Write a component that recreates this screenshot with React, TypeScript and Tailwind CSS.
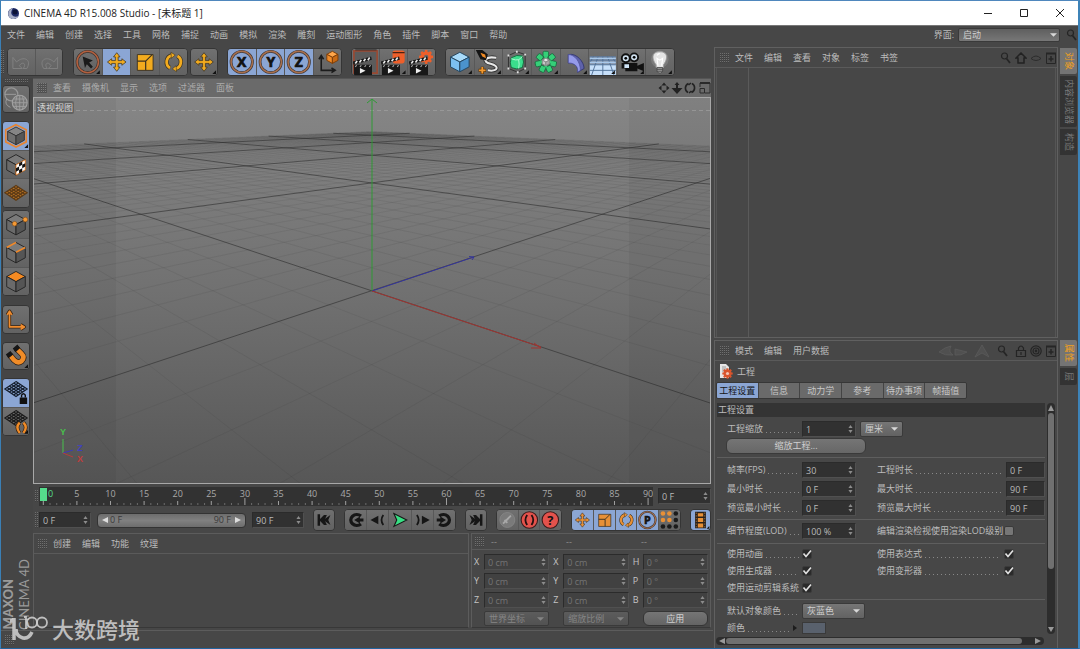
import type { ReactNode } from "react";
import clsx from "clsx";

const MENU = ["文件", "编辑", "创建", "选择", "工具", "网格", "捕捉", "动画", "模拟", "渲染", "雕刻", "运动图形", "角色", "插件", "脚本", "窗口", "帮助"];
const VIEW_MENU = ["查看", "摄像机", "显示", "选项", "过滤器", "面板"];
const OBJECT_MENU = ["文件", "编辑", "查看", "对象", "标签", "书签"];
const MATERIAL_MENU = ["创建", "编辑", "功能", "纹理"];
const ATTR_MENU = ["模式", "编辑", "用户数据"];
const ATTR_TABS = ["工程设置", "信息", "动力学", "参考", "待办事项", "帧插值"];

/* ---------- shared pieces ---------- */

function Grip({ className }: { className: string }) {
  return (
    <span
      aria-hidden
      className={clsx(
        "shrink-0 bg-[length:2px_2px] bg-[linear-gradient(90deg,#00000000_1px,#474747_1px),linear-gradient(#8a8a8a_1px,#3a3a3a_1px)]",
        className
      )}
    />
  );
}

function MenuItems({ items, className }: { items: string[]; className?: string }) {
  return (
    <nav className={clsx("flex gap-[11px]", className)}>
      {items.map((item) => (
        <button key={item} className="whitespace-nowrap">
          {item}
        </button>
      ))}
    </nav>
  );
}

function ToolGroup({ className, column, children }: { className: string; column?: boolean; children: ReactNode }) {
  return (
    <div
      className={clsx(
        "flex shrink-0 divide-[#585858] overflow-hidden rounded-sm border border-[#353535] bg-[#676767]",
        column ? "flex-col divide-y" : "divide-x",
        className
      )}
    >
      {children}
    </div>
  );
}

interface ToolProps {
  label: string;
  active?: boolean;
  more?: boolean;
  children: ReactNode;
}

function Tool({ label, active, more, children }: ToolProps) {
  return (
    <button
      aria-label={label}
      title={label}
      className={clsx("min-h-0 min-w-0 flex-1", active ? "bg-[#8ba6d4]" : "bg-linear-to-b from-[#707070] to-[#626262]")}
    >
      <svg viewBox="0 0 28 28" className="h-full w-full">
        {children}
        {more && <path d="M27 23v4h-4z" fill="#111" />}
      </svg>
    </button>
  );
}

function Spinner() {
  return (
    <svg viewBox="0 0 6 10" className="pointer-events-none absolute right-[3px] top-1/2 h-2 w-[5px] -translate-y-1/2">
      <path d="M3 0l2.600 3.800H.4zM3 10L.4 6.200h5.200z" fill="#8c8c8c" />
    </svg>
  );
}

interface NumberFieldProps {
  label: string;
  value: string;
  className?: string;
  dim?: boolean;
  spinner?: boolean;
}

function NumberField({ label, value, className, dim, spinner = true }: NumberFieldProps) {
  return (
    <span className={clsx("relative block h-4 shrink-0", className)}>
      <input
        aria-label={label}
        defaultValue={value}
        className={clsx(
          "block h-full w-full border border-t-[#2b2b2b] border-r-[#505050] border-b-[#505050] border-l-[#2b2b2b] pl-[3px] outline-none",
          dim ? "bg-[#414141] text-[#747474]" : "bg-[#313131] text-[#b9b9b9]"
        )}
      />
      {spinner && <Spinner />}
    </span>
  );
}

function Dropdown({ label, value, className, dim }: { label: string; value: string; className: string; dim?: boolean }) {
  return (
    <span className={clsx("relative block shrink-0", className)}>
      <select
        aria-label={label}
        className={clsx(
          "block h-full w-full appearance-none rounded-xs border border-[#3a3a3a] bg-linear-to-b pl-1 outline-none",
          dim ? "from-[#5c5c5c] to-[#525252] text-[#858585]" : "from-[#767676] to-[#626262] text-[#cfcfcf]"
        )}
      >
        <option>{value}</option>
      </select>
      <svg viewBox="0 0 8 4" className="pointer-events-none absolute right-[5px] top-1/2 h-1 w-[7px] -translate-y-1/2">
        <path d="M0 0h8L4 4z" fill={dim ? "#858585" : "#d8d8d8"} />
      </svg>
    </span>
  );
}

/* ---------- drawings ---------- */

interface CubeProps {
  x: number;
  y: number;
  w: number;
  h: number;
  top: string;
  left: string;
  right: string;
  stroke?: string;
}

function Cube({ x, y, w, h, top, left, right, stroke = "#222" }: CubeProps) {
  const k = h / 2;
  return (
    <g stroke={stroke} strokeWidth="1" strokeLinejoin="round">
      <path d={`M${x} ${y - h}L${x + w} ${y - k}L${x} ${y}L${x - w} ${y - k}z`} fill={top} />
      <path d={`M${x - w} ${y - k}L${x} ${y}V${y + h}L${x - w} ${y + k}z`} fill={left} />
      <path d={`M${x + w} ${y - k}L${x} ${y}V${y + h}L${x + w} ${y + k}z`} fill={right} />
    </g>
  );
}

function GrayCube({ top = "#7a7a7a" }: { top?: string }) {
  return <Cube x={14} y={14} w={10} h={11} top={top} left="#6a6a6a" right="#555" stroke="#242424" />;
}

function MoveCross({ fill }: { fill: string }) {
  return (
    <path
      d="M14 4l3.500 4.500h-2v4h4v-2L24 14l-4.500 3.500v-2h-4v4h2L14 24l-3.500-4.500h2v-4h-4v2L4 14l4.500-3.500v2h4v-4h-2z"
      fill={fill}
      stroke="#3b3222"
      strokeWidth=".8"
    />
  );
}

function ScaleBox({ fill }: { fill: string }) {
  return (
    <g fill={fill} stroke="#3b3222" strokeWidth="1">
      <path d="M6 6h17v17H6z" />
      <path d="M6 13h9v10M15 13l7-7" fill="none" strokeWidth="1.300" />
    </g>
  );
}

function RotateRing({ fill }: { fill: string }) {
  return (
    <g fill="none">
      <path d="M10 20.500A7.500 7.500 0 0 1 12 6.800M18 7.500A7.500 7.500 0 0 1 16 21.200" stroke="#3b3222" strokeWidth="4.500" />
      <path d="M10 20.500A7.500 7.500 0 0 1 12 6.800M18 7.500A7.500 7.500 0 0 1 16 21.200" stroke={fill} strokeWidth="3" />
      <path d="M11 3.500l4.500 3-4 3.500zM17 24.500l-4.500-3 4-3.500z" fill={fill} stroke="#3b3222" strokeWidth=".6" />
    </g>
  );
}

function AxisLetter({ letter }: { letter: string }) {
  return (
    <>
      <circle cx="14" cy="14" r="11.500" fill="none" stroke="#3c3838" strokeWidth="3" />
      <circle cx="14" cy="14" r="11.500" fill="none" stroke="#a86f4c" strokeWidth="1.600" />
      <text x="14" y="19.500" textAnchor="middle" fill="#111" stroke="#111" strokeWidth=".8" className="font-['Open_Sans'] text-[15px] font-bold">
        {letter}
      </text>
    </>
  );
}

function Clapper() {
  return (
    <>
      <path d="M1.500 17H21v11H1.500z" fill="#181818" />
      <path d="M.5 13.500L20 8l.8 3.500L1 17z" fill="#151515" />
      <path d="M3 15.700l2-2.800M7.500 14.500l2-2.800M12 13.200l2-2.800M16.500 12l2-2.800" stroke="#e8e8e8" strokeWidth="1.800" />
      <path d="M3 19.300l1.500-1.800M8 19.300l1.500-1.800M13 19.300l1.500-1.800M18 19.300l1.500-1.800" stroke="#aaa" strokeWidth="1.200" />
      <path d="M8 20.500l6 3-6 3z" fill="#eee" />
    </>
  );
}

function Gear({ x, y, r, fill, hole }: { x: number; y: number; r: number; fill: string; hole: string }) {
  return (
    <g>
      {[0, 45, 90, 135].map((a) => (
        <rect key={a} x={x - r * 0.25} y={y - r * 1.3} width={r * 0.5} height={r * 2.6} fill={fill} transform={`rotate(${a} ${x} ${y})`} />
      ))}
      <circle cx={x} cy={y} r={r} fill={fill} />
      <circle cx={x} cy={y} r={r * 0.4} fill={hole} />
    </g>
  );
}

function Mesh({ stroke, fill = "none", y = 14 }: { stroke: string; fill?: string; y?: number }) {
  return (
    <g stroke={stroke} strokeWidth="1.300" fill="none">
      <path d={`M14 ${y - 8}L26 ${y}L14 ${y + 8}L2 ${y}z`} fill={fill} />
      {[1, 2, 3, 4].map((n) => (
        <path
          key={n}
          d={`M${14 + n * 2.4} ${y - 8 + n * 1.6}l-12 8M${14 - n * 2.4} ${y - 8 + n * 1.6}l12 8`}
        />
      ))}
    </g>
  );
}

const SearchIcon = () => (
  <svg viewBox="0 0 12 12" className="h-3 w-3">
    <circle cx="4.500" cy="4" r="3" fill="none" stroke="#252525" strokeWidth="1.200" />
    <path d="M6.500 6.500L10 11" stroke="#252525" strokeWidth="1.800" />
  </svg>
);

const PlusBoxIcon = () => (
  <svg viewBox="0 0 12 12" className="h-3 w-3" fill="none" stroke="#262626">
    <path d="M1 1.500h10" strokeWidth="2" />
    <path d="M1.500 2v9.500h9V2" />
    <path d="M6 4v5.500M3.500 7h5" strokeWidth="1.500" />
  </svg>
);

/* ---------- viewport ---------- */

// Ground plane seen along its diagonal: (i, j) in grid cells -> screen
const CENTER_X = 337.5;
const HORIZON = 10.2;
const EXTENT = 4.7;

function project(i: number, j: number) {
  const z = 1 + (i + j) * 0.7209;
  return [CENTER_X + (396.7 * (i - j)) / z, HORIZON + 182.5 / z];
}

function gridPath(steps: number[]) {
  let d = "";
  for (const c of steps) {
    const from = Math.max(-EXTENT, -0.95 - c);
    const [ax, ay] = project(c, from);
    const [bx, by] = project(c, EXTENT);
    d += `M${ax.toFixed(1)} ${ay.toFixed(1)}L${bx.toFixed(1)} ${by.toFixed(1)}`;
    d += `M${(2 * CENTER_X - ax).toFixed(1)} ${ay.toFixed(1)}L${(2 * CENTER_X - bx).toFixed(1)} ${by.toFixed(1)}`;
  }
  return d;
}

const MINOR = Array.from({ length: 95 }, (_, n) => (n - 47) / 10).filter((c) => !Number.isInteger(c));
const MAJOR = [-1, 0, 1, 2, 3, 4];

function Viewport() {
  return (
    <div className="relative min-h-0 flex-1 border border-[#a8a8a8] bg-linear-to-b from-[#868686] via-[#717171] to-[#575757]">
      <svg viewBox="0 0 676 385" preserveAspectRatio="xMidYMid slice" className="absolute inset-0 h-full w-full">
        <path d={gridPath(MINOR)} stroke="#333" strokeOpacity=".1" fill="none" />
        <path d={gridPath(MAJOR)} stroke="#2e2e2e" strokeOpacity=".62" fill="none" />
        <path d="M0 0h82v385H0zM595 0h81v385h-81z" fill="#000" fillOpacity=".045" />
        <path d="M0 12.500h676" stroke="#a5a5a5" strokeDasharray="4 3" strokeOpacity=".6" />
        <g fill="none">
          <path d="M338 193V1M333 5l5-4 5 4" stroke="#2f9a35" />
          <path d="M338 193l102-34M435 158.500l5 .5-2 3" stroke="#35359a" />
          <path d="M338 193l169 56M497 250h10l-7-5" stroke="#a03430" />
          <path d="M29 355v-14" stroke="#48c04c" />
          <path d="M29 355l10-3" stroke="#3b3bb8" />
          <path d="M29 355l10 4" stroke="#b83b3b" />
        </g>
        <g textAnchor="middle" className="font-['Liberation_Sans'] text-[9px] font-bold">
          <text x="29" y="337" fill="#48c04c">Y</text>
          <text x="46" y="353" fill="#4141bd">Z</text>
          <text x="46" y="364" fill="#c23c3c">X</text>
        </g>
      </svg>
      <span className="absolute left-[2px] top-[3px] rounded-xs bg-[#626262] px-px leading-[13px] text-[#d6d6d6]">透视视图</span>
    </div>
  );
}

function ViewHeader() {
  return (
    <div className="flex h-[19px] shrink-0 items-center border-t border-[#555] bg-[#6a6a6a] pl-1 text-[#acacac]">
      <Grip className="h-2.5 w-2.5 opacity-60" />
      <MenuItems items={VIEW_MENU} className="ml-[6px]" />
      <div className="ml-auto flex gap-px">
        <button aria-label="平移视图">
          <svg viewBox="0 0 12 12" className="h-3 w-3" fill="#222">
            <path d="M6 .5l2.500 3h-5zM6 11.500l2.500-3h-5zM.5 6l3-2.500v5zM11.500 6l-3-2.500v5z" />
          </svg>
        </button>
        <button aria-label="缩放视图">
          <svg viewBox="0 0 12 12" className="h-3 w-3" fill="#222">
            <path d="M6 0l2.500 3H7v3h4.500L6 12 .5 6H5V3H3.500z" />
          </svg>
        </button>
        <button aria-label="旋转视图">
          <svg viewBox="0 0 12 12" className="h-3 w-3" fill="none" stroke="#222" strokeWidth="1.600">
            <path d="M4 10.500a5 5 0 0 1 .5-9M8 1.500a5 5 0 0 1-.5 9M4.500 3L7 1M7.500 9L5 11" />
          </svg>
        </button>
        <button aria-label="切换视图">
          <svg viewBox="0 0 12 12" className="ml-0.5 h-3 w-3" fill="none" stroke="#2b2b2b">
            <path d="M1 1h10" strokeWidth="2" />
            <path d="M1 5V1h10v10H6M1 6.500h4.500V11H1z" />
          </svg>
        </button>
      </div>
    </div>
  );
}

/* ---------- toolbars ---------- */

function MainToolbar() {
  const yellow = "#f2ab1e";
  return (
    <div className="flex h-[33px] shrink-0 items-center">
      <Grip className="h-6 w-1 opacity-60" />
      <ToolGroup className="ml-0.5 h-7 w-14">
        <Tool label="撤销">
          <path d="M5 9v12h10l-3-3c4-6 8-1 4 3h4c6-10-4-14-11-7z" fill="none" stroke="#828282" strokeWidth="1" />
        </Tool>
        <Tool label="重做">
          <path d="M23 9v12H13l3-3c-4-6-8-1-4 3H8c-6-10 4-14 11-7z" fill="none" stroke="#828282" strokeWidth="1" />
        </Tool>
      </ToolGroup>
      <ToolGroup className="ml-[10px] h-7 w-[115px]">
        <Tool label="实时选择" more>
          <circle cx="14" cy="14" r="11.500" fill="none" stroke="#3a302c" strokeWidth="3" />
          <circle cx="14" cy="14" r="11.500" fill="none" stroke="#b2603f" strokeWidth="1.700" />
          <path d="M8.500 8l11 4.500-4 2 4 4.500-2 2-4.500-4.500-2 4z" fill="#1a1a1a" />
        </Tool>
        <Tool label="移动" active>
          <MoveCross fill={yellow} />
        </Tool>
        <Tool label="缩放">
          <ScaleBox fill={yellow} />
        </Tool>
        <Tool label="旋转">
          <RotateRing fill={yellow} />
        </Tool>
      </ToolGroup>
      <ToolGroup className="ml-[2px] h-7 w-7">
        <Tool label="最近使用工具" more>
          <MoveCross fill={yellow} />
        </Tool>
      </ToolGroup>
      <ToolGroup className="ml-[9px] h-7 w-[115px]">
        {["X", "Y", "Z"].map((axis) => (
          <Tool key={axis} label={`${axis} 轴`} active>
            <AxisLetter letter={axis} />
          </Tool>
        ))}
        <Tool label="坐标系统">
          <path d="M7 8v15h14M4.500 11L7 7l2.500 4M18 20.500l4 2.500-4 2.500" fill="none" stroke="#1c1c1c" strokeWidth="1.700" />
          <Cube x={19} y={9} w={6} h={6.5} top="#ffa64a" left="#f08a28" right="#c96a14" stroke="#7a3d08" />
        </Tool>
      </ToolGroup>
      <ToolGroup className="ml-[9px] h-7 w-[85px]">
        <Tool label="渲染活动视图">
          <path d="M1.500 2h25v24h-25z" fill="#5c5c5c" stroke="#9a4a33" strokeWidth="1.800" />
          <path d="M3 1h23" stroke="#2a2a2a" />
          <Clapper />
        </Tool>
        <Tool label="渲染到图片查看器" more>
          <rect x="13" y="1.500" width="13" height="14" rx="2.500" fill="#ee5f2a" />
          <path d="M13 4h13" stroke="#4a2010" strokeWidth="1.300" />
          <Clapper />
        </Tool>
        <Tool label="编辑渲染设置">
          <Gear x={19} y={8.5} r={5.8} fill="#ee5f2a" hole="#666" />
          <Clapper />
        </Tool>
      </ToolGroup>
      <ToolGroup className="ml-[9px] h-7 w-[230px]">
        <Tool label="立方体" more>
          <Cube x={14} y={14} w={10} h={10.5} top="#a8dbfb" left="#7cc0f2" right="#4b93cc" stroke="#23435c" />
        </Tool>
        <Tool label="画笔" more>
          <path d="M11 12q4-4 11-2.500M22 9.500c-12-2-16 4-6 6.500s8 8.500-3 7" fill="none" stroke="#333" strokeWidth="4" />
          <path d="M22 9.500c-12-2-16 4-6 6.500s8 8.500-3 7" fill="none" stroke="#e8e8e8" strokeWidth="2.200" />
          <path d="M0 1l7 0 6 5-2 6-6-1-3-6z" fill="#151515" />
          <path d="M5 4l5 2 1 4-4-2z" fill="#ef8a24" />
          <path d="M7 19v8M3 23h8" stroke="#5a3308" strokeWidth="3.500" />
          <path d="M7 19.500v7M3.500 23h7" stroke="#f39a30" strokeWidth="2" />
        </Tool>
        <Tool label="细分曲面" more>
          <path d="M5 7l9-4 9 3v15l-8 4-10-4z" fill="none" stroke="#2e2e2e" />
          <path d="M8 9.500q6-4 12-2 2.500 7 0 12.500-6 3-12 0-2-5 0-10.500z" fill="#3ade8c" stroke="#15633a" />
          <path d="M8 10.500q5 2 8 1 2-1 4-3.500M16 11.500q1 5 0 9.500" fill="none" stroke="#b4f9d4" strokeWidth="1" />
          <path d="M4 6h2v2H4zM13 2h2v2h-2zM22 5h2v2h-2zM4 20h2v2H4zM14 24h2v2h-2zM22 20h2v2h-2z" fill="#e2e2e2" />
        </Tool>
        <Tool label="阵列" more>
          {[0, 51, 103, 154, 206, 257, 309].map((a) => (
            <rect key={a} x="11" y="2.500" width="6" height="6.500" rx="1.500" fill="#35cf78" stroke="#15633a" strokeWidth=".8" transform={`rotate(${a} 14 14)`} />
          ))}
          <path d="M14 8v12M8 14h12" stroke="#35cf78" strokeWidth="3" />
          <Cube x={14} y={14} w={3.8} h={4} top="#e6e6e6" left="#c6c6c6" right="#aaa" stroke="#888" />
        </Tool>
        <Tool label="弯曲" more>
          <path d="M7 6c9-2 17 8 17 15l-7 4C18 18 13 15 7 15z" fill="#5f63ac" stroke="#33376e" />
          <path d="M7 6c7 0 13 8 13 17l-3 2C18 18 13 15 7 15z" fill="#959bea" stroke="#4a4e94" strokeWidth=".7" />
        </Tool>
        <Tool label="地面" more>
          <path d="M0 8h28v20H0z" fill="#8f9fb5" />
          <path d="M0 17h28v11H0z" fill="#c7e0fa" />
          <path d="M0 8.500h28M0 12h28M0 17h28M0 23h28M14 8v20M9 8L2 28M19 8l7 20M4 8l-4 7M24 8l4 7" stroke="#4f6f96" fill="none" />
          <path d="M0 10h28M0 14.500h28" stroke="#a8c8ea" strokeWidth="1.300" />
        </Tool>
        <Tool label="摄像机" more>
          <circle cx="7.500" cy="10" r="4.300" fill="#cfe0ee" stroke="#111" strokeWidth="2" />
          <circle cx="16.500" cy="9" r="4.300" fill="#cfe0ee" stroke="#111" strokeWidth="2" />
          <circle cx="7.500" cy="10" r="1.500" />
          <circle cx="16.500" cy="9" r="1.500" />
          <path d="M3 15h17v3l7-3v9l-7-3v3H7v-3H3z" fill="#111" />
          <path d="M6 16.500h5v4H6z" fill="#cfe4f7" />
        </Tool>
        <Tool label="灯光" more>
          <circle cx="14" cy="11" r="9.500" fill="#fff" fillOpacity=".12" />
          <path d="M14 3c10 0 8 9 4 14v3h-8v-3C6 12 4 3 14 3z" fill="#e4e4e4" stroke="#9b9b9b" />
          <path d="M12 18l-1-8 3 2 3-2-1 8M11 7q1-2 3-2" fill="none" stroke="#fff" strokeWidth="1.200" />
          <path d="M11 20h6v4l-2 2h-2l-2-2zM11 22h6M11 24h6" fill="#999" stroke="#444" strokeWidth=".8" />
        </Tool>
      </ToolGroup>
    </div>
  );
}

function ModePalette() {
  return (
    <aside className="flex w-8 shrink-0 flex-col bg-[#454545] pl-px pt-px">
      <Grip className="ml-[3px] h-1 w-6 opacity-60" />
      <ToolGroup className="mt-0.5 h-7 w-7">
        <Tool label="转为可编辑对象">
          <circle cx="9" cy="9" r="7" fill="none" stroke="#989898" strokeWidth="1.300" />
          <circle cx="18" cy="18" r="8" fill="#777" stroke="#a2a2a2" strokeWidth="1.200" />
          <path d="M10 18h16M18 10v16M12 14h12M12 22h12M15 11q-3 7 0 14M21 11q3 7 0 14M2 9h12M4 14q-3 6 4 9" fill="none" stroke="#a2a2a2" strokeWidth=".9" />
        </Tool>
      </ToolGroup>
      <ToolGroup column className="mt-2 h-[87px] w-7">
        <Tool label="模型" active more>
          <path d="M14 2l11 5.500v13L14 26 3 20.500v-13z" fill="none" stroke="#e88430" strokeWidth="1.800" />
          <Cube x={14} y={14} w={9} h={9.5} top="#858585" left="#6f6f6f" right="#565656" stroke="#333" />
        </Tool>
        <Tool label="纹理">
          <GrayCube />
          <path d="M14 14l10-5.500v11L14 25z" fill="#fff" stroke="#e88430" />
          <path d="M17.300 12.200l3.400-1.900v3.700l-3.400 1.900zM14 17.700l3.300-1.800v3.700L14 21.400zM20.700 14l3.300-1.800v3.700l-3.300 1.800zM17.300 19.600l3.400-1.900v3.700l-3.400 1.800z" fill="#111" />
        </Tool>
        <Tool label="工作平面">
          <Mesh stroke="#5c3a16" fill="#b97424" />
        </Tool>
      </ToolGroup>
      <ToolGroup column className="mt-0.5 h-[86px] w-7">
        <Tool label="点">
          <GrayCube />
          <circle cx="12.500" cy="13" r="2.500" fill="#f59a35" stroke="#8a4a0c" strokeWidth=".6" />
          <circle cx="24" cy="8.500" r="2.500" fill="#f59a35" stroke="#8a4a0c" strokeWidth=".6" />
        </Tool>
        <Tool label="边">
          <GrayCube />
          <path d="M4 8.500L14 3M14 13.500L24 8.500" stroke="#f08a2c" strokeWidth="1.800" />
        </Tool>
        <Tool label="多边形">
          <GrayCube top="#f58a22" />
        </Tool>
      </ToolGroup>
      <ToolGroup className="mt-[9px] h-[29px] w-7">
        <Tool label="启用轴心">
          <g fill="none" strokeLinejoin="round">
            <path d="M7 6v16h15M4.500 9L7 5l2.500 4M19 19.500l4 2.500-4 2.500" stroke="#3a2412" strokeWidth="3.500" />
            <path d="M7 6v16h15M4.500 9L7 5l2.500 4M19 19.500l4 2.500-4 2.500" stroke="#ef8c2f" strokeWidth="1.800" />
          </g>
        </Tool>
      </ToolGroup>
      <ToolGroup className="mt-2 h-7 w-7">
        <Tool label="启用捕捉" more>
          <path d="M7 12.500l5 6q4 4 8 1 4-4 0-8l-6-6" fill="none" stroke="#2c2018" strokeWidth="6.500" />
          <path d="M7 12.500l5 6q4 4 8 1 4-4 0-8l-6-6" fill="none" stroke="#f08c28" strokeWidth="5" />
          <path d="M3 12.500l5-4 3 4-5 4zM10.500 6l5-4.500 3 4-5 4.500z" fill="#161616" />
        </Tool>
      </ToolGroup>
      <ToolGroup column className="mt-2 h-[58px] w-7">
        <Tool label="锁定工作平面" active>
          <Mesh stroke="#16202e" y={10} />
          <path d="M18 19h8v7h-8z" fill="#111" />
          <path d="M20 19v-2.500q2-3 4 0V19" fill="none" stroke="#111" strokeWidth="1.500" />
        </Tool>
        <Tool label="平面工作平面" more>
          <Mesh stroke="#1c1c1c" y={10} />
          <path d="M18 15q-5 5 0 11M22 15q5 5 0 11" fill="none" stroke="#3a2412" strokeWidth="4" />
          <path d="M18 15q-5 5 0 11M22 15q5 5 0 11" fill="none" stroke="#f08c28" strokeWidth="2.500" />
        </Tool>
      </ToolGroup>
      <div className="mt-auto flex items-end gap-[3px] text-[#9a9a9a]">
        <span className="rotate-180 font-['Lato'] text-[13px] leading-[13px] font-black [writing-mode:vertical-rl]">MAXON</span>
        <span className="rotate-180 font-['Lato'] text-[13px] leading-[13px] [writing-mode:vertical-rl]">CINEMA 4D</span>
      </div>
    </aside>
  );
}

/* ---------- timeline ---------- */

const frameX = (frame: number) => `${0.7 + (frame / 90) * 98.5}%`;

function Ruler() {
  const frames = Array.from({ length: 91 }, (_, f) => f);
  return (
    <div className="flex h-6 shrink-0 items-center pl-0.5">
      <Grip className="h-3 w-1 opacity-60" />
      <svg className="h-[19px] min-w-0 flex-1 bg-[#323232]">
        {frames.map((f) => (
          <line key={f} x1={frameX(f)} x2={frameX(f)} y1={f % 5 ? 16 : f % 30 ? 14 : 11} y2="18" stroke={f % 5 ? "#6c6c6c" : "#a0a0a0"} />
        ))}
        <rect x="1" y="1" width="7" height="13" fill="#55dd8c" />
        <text x="9" y="10" fill="#55dd8c" className="text-[9px]">0</text>
        {frames.filter((f) => f > 0 && f % 5 === 0).map((f) => (
          <text key={f} x={frameX(f)} y="10" textAnchor="middle" fill="#a9a9a9" className="text-[9px]">
            {f}
          </text>
        ))}
      </svg>
      <NumberField label="当前帧" value="0 F" className="ml-[5px] w-[53px]" />
    </div>
  );
}

function Transport() {
  const orange = "#e89036";
  return (
    <div className="flex h-6 shrink-0 items-center gap-[9px] pl-0.5">
      <div className="flex min-w-0 flex-1 items-center gap-[6px]">
        <Grip className="-mr-[6px] h-4 w-1 opacity-60" />
        <NumberField label="起始帧" value="0 F" className="w-[52px]" />
        <div className="flex h-[15px] min-w-0 flex-1 items-center rounded-sm border border-[#333] bg-linear-to-b from-[#6d6d6d] via-[#808080] to-[#6d6d6d] px-1 text-[#3a3a3a]">
          <button aria-label="向前滚动">
            <svg viewBox="0 0 6 6" className="h-1.5 w-1.5"><path d="M6 0v6L0 3z" fill="#ddd" /></svg>
          </button>
          <span className="ml-[2px]">0 F</span>
          <span className="mr-1 ml-auto">90 F</span>
          <button aria-label="向后滚动">
            <svg viewBox="0 0 6 6" className="h-1.5 w-1.5"><path d="M0 0v6l6-3z" fill="#ddd" /></svg>
          </button>
        </div>
        <NumberField label="结束帧" value="90 F" className="w-[52px]" />
      </div>
      <ToolGroup className="h-[22px] w-[22px]">
        <Tool label="转到开始">
          <path d="M5 6h3.500v6.500L14 7h4l-3 7 3 7h-4l-5.500-5.500V22H5z" fill="#161616" />
          <path d="M13 14l10-7-3 7 3 7z" fill="#161616" />
        </Tool>
      </ToolGroup>
      <ToolGroup className="h-[22px] w-28">
        <Tool label="转到上一关键帧">
          <path d="M21.500 8.500A8.500 7.500 0 1 0 21.500 19.500" fill="none" stroke="#161616" strokeWidth="4.500" />
          <path d="M12 14l8-5v3h5v4h-5v3z" fill="#161616" />
        </Tool>
        <Tool label="转到上一帧">
          <path d="M4 14l11-6v12z" fill="#161616" />
          <path d="M22 7q-5 7 0 14" fill="none" stroke="#161616" strokeWidth="2.500" />
        </Tool>
        <Tool label="向前播放">
          <path d="M6 5l18 9-18 9 4-9z" fill="#37df83" stroke="#161616" strokeWidth="1.500" />
        </Tool>
        <Tool label="转到下一帧">
          <path d="M24 14L13 8v12z" fill="#161616" />
          <path d="M6 7q5 7 0 14" fill="none" stroke="#161616" strokeWidth="2.500" />
        </Tool>
        <Tool label="转到下一关键帧">
          <path d="M6.500 8.500A8.500 7.500 0 1 1 6.500 19.500" fill="none" stroke="#161616" strokeWidth="4.500" />
          <path d="M16 14L8 9v3H3v4h5v3z" fill="#161616" />
        </Tool>
      </ToolGroup>
      <ToolGroup className="h-[22px] w-[22px]">
        <Tool label="转到结束">
          <path d="M23 6h-3.500v6.500L14 7h-4l3 7-3 7h4l5.500-5.500V22H23z" fill="#161616" />
          <path d="M15 14L5 7l3 7-3 7z" fill="#161616" />
        </Tool>
      </ToolGroup>
      <ToolGroup className="h-[22px] w-[66px]">
        <Tool label="记录活动对象">
          <circle cx="14" cy="14" r="10.500" fill="#7a7a7a" stroke="#8a8a8a" />
          <path d="M8 19l5-5 6-6M10 14l4 4" stroke="#a8a8a8" strokeWidth="2.500" />
        </Tool>
        <Tool label="自动关键帧">
          <circle cx="14" cy="14" r="11.500" fill="#e4524c" stroke="#3a1a1a" strokeWidth="1.500" />
          <path d="M11 7q-5 7 0 14M17 7q5 7 0 14" fill="none" stroke="#231010" strokeWidth="2.500" />
        </Tool>
        <Tool label="关键帧选集">
          <circle cx="14" cy="14" r="11.500" fill="#e4524c" stroke="#3a1a1a" strokeWidth="1.500" />
          <text x="14" y="20.500" textAnchor="middle" className="font-['Open_Sans'] text-[18px] font-bold" fill="#111">?</text>
        </Tool>
      </ToolGroup>
      <ToolGroup className="h-[22px] w-[110px]">
        <Tool label="位置" active>
          <MoveCross fill={orange} />
        </Tool>
        <Tool label="缩放关键帧" active>
          <ScaleBox fill={orange} />
        </Tool>
        <Tool label="旋转关键帧" active>
          <RotateRing fill={orange} />
        </Tool>
        <Tool label="参数" active>
          <AxisLetter letter="P" />
        </Tool>
        <Tool label="点级别动画">
          {[0, 1, 2].map((r) =>
            [0, 1, 2].map((c) => (
              <circle key={`${r}-${c}`} cx={5 + c * 9} cy={5 + r * 9} r="3.200" fill={r < 2 && c < 2 ? orange : "#1b1b1b"} />
            ))
          )}
        </Tool>
      </ToolGroup>
      <ToolGroup className="h-[22px] w-[21px]">
        <Tool label="播放模式" active more>
          <path d="M6 2h16v24H6z" fill="#2a211a" />
          <path d="M10 4h8v5h-8zM10 11h8v6h-8zM10 19h8v6h-8z" fill={orange} />
          <path d="M7.800 3v23M20.200 3v23" stroke="#c08b54" strokeDasharray="2 2" />
        </Tool>
      </ToolGroup>
    </div>
  );
}

/* ---------- bottom panels ---------- */

function MaterialPanel() {
  return (
    <section className="min-w-0 flex-1 border border-[#5c5c5c] border-b-[#383838]">
      <div className="flex h-5 items-center border-b border-[#5a5a5a] pl-1">
        <Grip className="h-2.5 w-2.5 opacity-60" />
        <MenuItems items={MATERIAL_MENU} className="ml-[5px]" />
      </div>
    </section>
  );
}

function CoordinatePanel() {
  const rows = [["X", "X", "H"], ["Y", "Y", "P"], ["Z", "Z", "B"]];
  return (
    <section className="w-[240px] shrink-0 border border-[#5c5c5c] border-b-[#383838]">
      <div className="flex h-4 items-center border-b border-[#5a5a5a] pl-[3px] text-[#909090]">
        <Grip className="h-2.5 w-2.5 opacity-60" />
        <span className="ml-[6px] w-[75px]">--</span>
        <span className="w-[75px]">--</span>
        <span>--</span>
      </div>
      <div className="grid grid-cols-3 gap-x-1 gap-y-[3px] px-[2px] pt-1">
        {rows.map((row, r) =>
          row.map((axis, c) => (
            <div key={`${r}-${c}`} className="flex items-center">
              <span className="w-[10px] shrink-0 text-[#c4c4c4]">{axis}</span>
              <NumberField label={`${["位置", "尺寸", "旋转"][c]} ${axis}`} value={c === 2 ? "0 °" : "0 cm"} dim className="min-w-0 flex-1" />
            </div>
          ))
        )}
        <Dropdown label="坐标" value="世界坐标" dim className="ml-[10px] h-[15px]" />
        <Dropdown label="缩放" value="缩放比例" dim className="ml-[10px] h-[15px]" />
        <button className="ml-[10px] h-[15px] rounded-md border border-[#353535] bg-linear-to-b from-[#757575] to-[#646464] leading-3 text-[#d0d0d0]">应用</button>
      </div>
    </section>
  );
}

/* ---------- right side ---------- */

function ObjectManager() {
  return (
    <section className="mt-0.5 flex h-[291px] shrink-0 flex-col border border-[#606060]">
      <div className="flex h-5 shrink-0 items-center border-b border-[#5a5a5a] pl-[5px]">
        <Grip className="h-2.5 w-2.5 opacity-60" />
        <MenuItems items={OBJECT_MENU} className="ml-[5px]" />
        <div className="ml-auto flex gap-[3px]">
          <button aria-label="搜索"><SearchIcon /></button>
          <button aria-label="主页">
            <svg viewBox="0 0 12 12" className="h-3 w-3" fill="none" stroke="#222" strokeWidth="1.500">
              <path d="M3 11V6H1l5-5 5 5H9v5z" />
            </svg>
          </button>
          <button aria-label="显示">
            <svg viewBox="0 0 12 12" className="h-3 w-3" fill="none" stroke="#2c2c2c">
              <path d="M1 6.500q5-5 10 0-5 4-10 0z" />
            </svg>
          </button>
          <button aria-label="新建面板"><PlusBoxIcon /></button>
        </div>
      </div>
      <div className="mx-px flex min-h-0 flex-1 border-x border-[#555]">
        <div className="w-8 border-r border-[#5a5a5a]" />
      </div>
    </section>
  );
}

function Leader() {
  return <span aria-hidden className="mx-[3px] mt-[7px] h-px min-w-0 flex-1 bg-[length:4px_1px] bg-[linear-gradient(90deg,#888_1px,transparent_1px)]" />;
}

function AttrLabel({ text, className, leader = true }: { text: string; className?: string; leader?: boolean }) {
  return (
    <span className={clsx("flex items-center whitespace-nowrap", className)}>
      {text}
      {leader && <Leader />}
    </span>
  );
}

function CheckRow({ label, className, checked = true, leader }: { label: string; className: string; checked?: boolean; leader?: boolean }) {
  return (
    <label className="flex items-center">
      <AttrLabel text={label} className={className} leader={leader} />
      <input
        type="checkbox"
        defaultChecked={checked}
        className="peer h-[10px] w-[10px] shrink-0 appearance-none rounded-xs border border-[#3a3a3a] bg-[#767676] checked:bg-[#2a2a2a]"
      />
      <svg viewBox="0 0 10 10" className="pointer-events-none relative -ml-[10px] hidden h-[10px] w-[10px] peer-checked:block" fill="none" stroke="#e0e0e0" strokeWidth="1.700">
        <path d="M1.500 4.500L4 7.500l5-6" />
      </svg>
    </label>
  );
}

function TimeRow({ left, value, right, end }: { left: string; value: string; right: string; end: string }) {
  return (
    <div className="flex h-[18px] items-center pl-[10px]">
      <AttrLabel text={left} className="w-[75px]" />
      <NumberField label={left} value={value} className="w-[54px]" />
      <AttrLabel text={right} className="ml-[21px] min-w-0 flex-1" />
      <NumberField label={right} value={end} spinner={false} className="w-[39px]" />
    </div>
  );
}

const Rule = ({ className }: { className?: string }) => <hr className={clsx("border-[#5e5e5e]", className)} />;

function AttributeManager() {
  return (
    <section className="mt-[2px] flex min-h-0 flex-1 flex-col border border-b-0 border-[#606060]">
      <div className="flex h-5 shrink-0 items-center border-b border-[#5a5a5a] pl-[5px]">
        <Grip className="h-2.5 w-2.5 opacity-60" />
        <MenuItems items={ATTR_MENU} className="ml-[5px]" />
        <svg viewBox="0 0 50 14" className="mr-2 ml-auto h-[14px] w-[50px]" fill="#505050" stroke="#5a5a5a" strokeWidth=".8">
          <path d="M0 8q6-5 12-6-3 6 2 9-8 1-14-3zM16 5l12 3q-6 4-12 3zM36 13l7-12 7 12-7-4z" />
        </svg>
        <div className="flex gap-[3px]">
          <button aria-label="搜索属性" className="mr-[3px]"><SearchIcon /></button>
          <button aria-label="锁定">
            <svg viewBox="0 0 12 12" className="h-3 w-3" fill="none" stroke="#242424" strokeWidth="1.200">
              <path d="M1.500 5.500h9v6h-9zM3.500 5V3q2.500-4 5 0v2M6 7v3" />
            </svg>
          </button>
          <button aria-label="目标">
            <svg viewBox="0 0 12 12" className="h-3 w-3" fill="none" stroke="#242424" strokeWidth="1.200">
              <circle cx="6" cy="6" r="5.200" />
              <circle cx="6" cy="6" r="3" />
              <circle cx="6" cy="6" r=".8" />
            </svg>
          </button>
          <button aria-label="新建属性面板"><PlusBoxIcon /></button>
        </div>
      </div>

      <div className="flex h-[21px] shrink-0 items-center gap-1 pl-[4px]">
        <svg viewBox="0 0 14 15" className="h-[15px] w-[14px]">
          <path d="M1 0h6l3 3v11H1z" fill="#e6e6e6" />
          <path d="M3 3h4M3 5h5M3 7h3" stroke="#888" strokeWidth=".8" />
          <Gear x={8.5} y={9.5} r={4} fill="#d9542c" hole="#f0c4b4" />
        </svg>
        <span>工程</span>
      </div>

      <div role="tablist" className="ml-px flex h-[17px] w-[251px] shrink-0 gap-px overflow-hidden rounded-xs border border-[#373737] bg-[#444]">
        {ATTR_TABS.map((tab, i) => (
          <button
            key={tab}
            role="tab"
            aria-selected={i === 0}
            className={clsx("min-w-0 flex-1 leading-3 whitespace-nowrap", i === 0 ? "bg-[#8ba6d4] text-[#151515]" : "bg-[#6a6a6a] text-[#c8c8c8]")}
          >
            {tab}
          </button>
        ))}
      </div>

      <div className="mt-1 flex min-h-0 flex-1">
        <div className="ml-[2px] min-w-0 flex-1 overflow-hidden">
          <h2 className="h-[14px] bg-[#343434] pl-px leading-[14px]">工程设置</h2>
          <div className="mt-[3px] flex h-[18px] items-center pl-[10px]">
            <AttrLabel text="工程缩放" className="w-[75px]" />
            <NumberField label="工程缩放" value="1" className="w-[54px]" />
            <Dropdown label="单位" value="厘米" className="ml-1 h-4 w-[43px]" />
          </div>
          <button className="ml-[9px] block h-4 w-[140px] rounded-md border border-[#3a3a3a] bg-linear-to-b from-[#757575] to-[#676767] leading-3 text-[#cfcfcf]">
            缩放工程...
          </button>
          <Rule className="my-[3px]" />
          <div className="flex flex-col gap-px">
            <TimeRow left="帧率(FPS)" value="30" right="工程时长" end="0 F" />
            <TimeRow left="最小时长" value="0 F" right="最大时长" end="90 F" />
            <TimeRow left="预览最小时长" value="0 F" right="预览最大时长" end="90 F" />
          </div>
          <Rule className="mt-[2px] mb-[2px]" />
          <div className="flex h-[18px] items-center pl-[10px]">
            <AttrLabel text="细节程度(LOD)" className="w-[75px]" />
            <NumberField label="细节程度" value="100 %" className="mr-[21px] w-[54px]" />
            <CheckRow label="编辑渲染检视使用渲染LOD级别" className="w-[127px]" checked={false} leader={false} />
          </div>
          <Rule className="mt-[3px] mb-[1px]" />
          <div className="grid grid-cols-[150px_1fr] pl-[10px] *:h-[17px]">
            <CheckRow label="使用动画" className="w-[75px]" />
            <CheckRow label="使用表达式" className="w-[127px]" />
            <CheckRow label="使用生成器" className="w-[75px]" />
            <CheckRow label="使用变形器" className="w-[127px]" />
            <CheckRow label="使用运动剪辑系统" className="w-[75px]" leader={false} />
          </div>
          <Rule className="mt-[3px] mb-[2px]" />
          <div className="flex h-[18px] items-center pl-[10px]">
            <AttrLabel text="默认对象颜色" className="w-[75px]" />
            <Dropdown label="默认对象颜色" value="灰蓝色" className="h-4 w-[63px]" />
          </div>
          <div className="flex h-4 items-center pl-[10px]">
            <AttrLabel text="颜色" className="w-[66px]" />
            <svg viewBox="0 0 4 6" className="mr-[5px] h-1.5 w-1"><path d="M0 0l4 3-4 3z" fill="#1c1c1c" /></svg>
            <button aria-label="颜色" className="h-3 w-6 border border-[#3a3a3a] bg-[#59616d]" />
          </div>
        </div>
        <div className="mr-[2px] ml-[2px] flex w-[8px] flex-col items-center justify-between rounded-full bg-[#2d2d2d]">
          <svg viewBox="0 0 6 6" className="my-0.5 h-1.5 w-1.5 shrink-0"><path d="M3 0l3 6H0z" fill="#999" /></svg>
          <div className="h-[156px] w-[6px] shrink-0 rounded-sm bg-[#707070]" />
          <div className="flex-1" />
          <svg viewBox="0 0 6 6" className="mb-0.5 h-1.5 w-1.5 shrink-0"><path d="M0 1h6L3 6z" fill="#999" /></svg>
        </div>
      </div>
      <div className="my-[3px] mr-[13px] ml-px flex h-2 shrink-0 items-center rounded-full bg-[#2d2d2d] px-[3px]">
        <svg viewBox="0 0 6 6" className="h-1.5 w-1.5 shrink-0"><path d="M6 0v6L0 3z" fill="#999" /></svg>
        <div className="ml-px h-[6px] w-[92%] rounded-sm bg-[#707070]" />
        <svg viewBox="0 0 6 6" className="ml-auto h-1.5 w-1.5 shrink-0"><path d="M0 0v6l6-3z" fill="#999" /></svg>
      </div>
    </section>
  );
}

function SideTab({ label, active, className }: { label: string; active?: boolean; className: string }) {
  return (
    <button
      className={clsx(
        "flex w-[17px] shrink-0 items-center justify-center rounded-r-xs [writing-mode:vertical-rl] [text-orientation:sideways]",
        active ? "bg-[#747474] text-[#f0a020]" : "bg-[#333] text-[#777]",
        className
      )}
    >
      {label}
    </button>
  );
}

/* ---------- window ---------- */

function TitleBar() {
  return (
    <header className="flex h-6 shrink-0 items-center bg-white pl-[6px] text-[#222]">
      <svg viewBox="0 0 13 13" className="h-[13px] w-[13px]">
        <circle cx="6.500" cy="6.500" r="5.500" fill="#1f2b66" />
        <path d="M1.500 8.500Q0 3 6 1q-3 4-1 7t7 1Q9 13.500 4 11.500 2 10.500 1.500 8.500z" fill="#a9b0c8" />
        <circle cx="8" cy="5" r="2.500" fill="#0d1436" />
      </svg>
      <h1 className="ml-1 font-['Open_Sans','Noto_Sans_CJK_SC',sans-serif] text-[10px]">CINEMA 4D R15.008 Studio - [未标题 1]</h1>
      <div className="mr-[13px] ml-auto flex gap-[26px]">
        <button aria-label="最小化">
          <svg viewBox="0 0 10 10" className="h-[10px] w-[10px]"><path d="M1 5.500h8" stroke="#222" /></svg>
        </button>
        <button aria-label="最大化">
          <svg viewBox="0 0 10 10" className="h-[10px] w-[10px]"><path d="M1.500 1.500h7v7h-7z" fill="none" stroke="#222" /></svg>
        </button>
        <button aria-label="关闭">
          <svg viewBox="0 0 10 10" className="h-[10px] w-[10px]"><path d="M1 1l8 8M9 1L1 9" stroke="#222" /></svg>
        </button>
      </div>
    </header>
  );
}

export default function App() {
  return (
    <div className="relative flex h-screen min-h-[600px] flex-col overflow-hidden border border-r-2 border-t-[#4f87bd] border-r-[#3d83b8] border-b-[#22649e] border-l-[#3a7fb5] bg-[#474747] font-['Open_Sans','Noto_Sans_CJK_SC',sans-serif] text-[9px] leading-3 text-[#bcbcbc]">
      <TitleBar />

      <div className="flex h-5 shrink-0 items-center border-t border-[#777] pb-px pl-[6px]">
        <MenuItems items={MENU} />
        <label htmlFor="layout" className="mr-1 ml-auto">界面:</label>
        <span className="relative mr-[6px] h-[14px] w-[102px]">
          <select id="layout" className="block h-full w-full appearance-none rounded-xs border border-[#3a3a3a] bg-linear-to-b from-[#5f5f5f] to-[#777] pl-1 text-[#d0d0d0] outline-none">
            <option>启动</option>
          </select>
          <svg viewBox="0 0 8 4" className="pointer-events-none absolute right-[3px] top-[5px] h-1 w-[7px]"><path d="M0 0h8L4 4z" fill="#d8d8d8" /></svg>
        </span>
        <button aria-label="查找命令"><SearchIcon /></button>
      </div>

      <div className="flex min-h-0 flex-1">
        <main className="flex min-w-0 flex-1 flex-col">
          <MainToolbar />
          <div className="flex min-h-0 flex-1">
            <ModePalette />
            <div className="flex min-w-0 flex-1 flex-col pr-[2px]">
              <ViewHeader />
              <Viewport />
              <Ruler />
              <Transport />
              <div className="flex h-[98px] shrink-0 gap-[2px] pt-[1px] pb-[2px]">
                <MaterialPanel />
                <CoordinatePanel />
              </div>
            </div>
          </div>
          <footer className="flex h-[18px] shrink-0 items-center border-t border-[#5c5c5c] pl-[4px]">
            <Grip className="h-2.5 w-2.5 opacity-60" />
          </footer>
        </main>

        <aside className="flex w-[345px] shrink-0 flex-col pl-px">
          <ObjectManager />
          <AttributeManager />
        </aside>

        <div className="flex w-5 shrink-0 flex-col gap-[2px] pt-[3px] pl-[2px]">
          <SideTab label="对象" active className="h-[26px]" />
          <SideTab label="内容浏览器" className="h-[51px]" />
          <SideTab label="构造" className="h-[26px]" />
          <SideTab label="属性" active className="mt-[183px] h-[26px]" />
          <SideTab label="层" className="h-[17px]" />
        </div>
      </div>

      <div className="pointer-events-none absolute bottom-[5px] left-[9px] flex items-center gap-[4px] text-[#d4d4d4]/85">
        <svg viewBox="0 0 38 28" className="h-7 w-[38px]" fill="none" stroke="currentColor">
          <path d="M0 6q4 0 4-3v22M22 17q-3 7-9 6-7-2-7-9" strokeWidth="3.500" />
          <path d="M14 2q2 0 2-1v13" strokeWidth="1.800" />
          <circle cx="22" cy="7.500" r="5" strokeWidth="1.800" />
          <circle cx="32" cy="7.500" r="5" strokeWidth="1.800" />
        </svg>
        <span className="text-[22px] leading-7 font-medium">大数跨境</span>
      </div>
    </div>
  );
}
